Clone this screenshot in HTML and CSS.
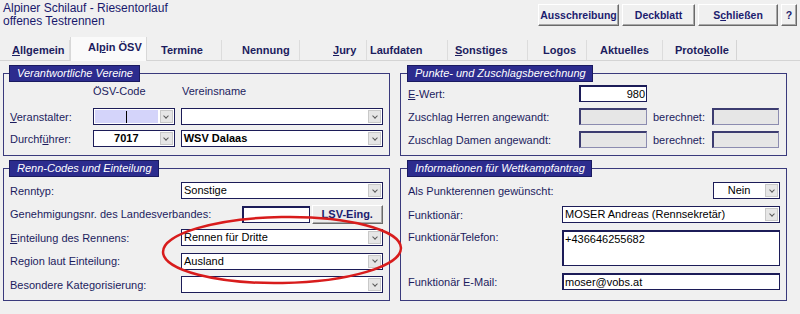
FILE: index.html
```html
<!DOCTYPE html>
<html lang="de">
<head>
    <meta charset="UTF-8">
    <title>Alpin ÖSV</title>
    <link rel="stylesheet" href="styles.css">
</head>
<body>
    <div class="top">
        <h1 class="title">Alpiner Schilauf - Riesentorlauf<br>offenes Testrennen</h1>
        <div class="actions">
            <button class="btn btn-aus">Ausschreibung</button>
            <button class="btn btn-deck">Deckblatt</button>
            <button class="btn btn-close">S<u>c</u>hließen</button>
            <button class="btn btn-help">?</button>
        </div>
    </div>

    <div class="tabs">
        <div class="tab"><u>A</u>llgemein</div>
        <div class="tab active">Al<u>p</u>in ÖSV</div>
        <div class="tab">Termine</div>
        <div class="tab">Nennung</div>
        <div class="tab"><u>J</u>ury</div>
        <div class="tab">Laufdaten</div>
        <div class="tab"><u>S</u>onstiges</div>
        <div class="tab">Logos</div>
        <div class="tab">Aktuelles</div>
        <div class="tab">Proto<u>k</u>olle</div>
    </div>

    <div class="panels">
        <!-- Vereine -->
        <fieldset class="box box-vereine">
            <legend>Verantwortliche Vereine</legend>
            <div class="form">
                <div class="head">
                    <span class="lbl"></span>
                    <span class="col-code">ÖSV-Code</span>
                    <span class="col-name">Vereinsname</span>
                </div>
                <div class="row">
                    <span class="lbl"><u>V</u>eranstalter:</span>
                    <div class="select sel-code">
                        <span class="val val-focus"><span class="caret"></span></span>
                        <span class="arr"></span>
                    </div>
                    <div class="select sel-name">
                        <span class="val"></span>
                        <span class="arr"></span>
                    </div>
                </div>
                <div class="row">
                    <span class="lbl">Durchf<u>ü</u>hrer:</span>
                    <div class="select sel-code">
                        <span class="val val-center bold">7017</span>
                        <span class="arr"></span>
                    </div>
                    <div class="select sel-name">
                        <span class="val bold">WSV Dalaas</span>
                        <span class="arr"></span>
                    </div>
                </div>
            </div>
        </fieldset>

        <!-- Punkte -->
        <fieldset class="box box-punkte">
            <legend>Punkte- und Zuschlagsberechnung</legend>
            <div class="form">
                <div class="row">
                    <span class="lbl"><u>E</u>-Wert:</span>
                    <div class="field field-num">980</div>
                </div>
                <div class="row">
                    <span class="lbl">Zuschlag Herren angewandt:</span>
                    <div class="field field-off"></div>
                    <span class="lbl-calc">berechnet:</span>
                    <div class="field field-off field-calc"></div>
                </div>
                <div class="row">
                    <span class="lbl">Zuschlag Damen angewandt:</span>
                    <div class="field field-off"></div>
                    <span class="lbl-calc">berechnet:</span>
                    <div class="field field-off field-calc"></div>
                </div>
            </div>
        </fieldset>

        <!-- Renn-Codes -->
        <fieldset class="box box-codes">
            <legend>Renn-Codes und Einteilung</legend>
            <div class="form">
                <div class="row">
                    <span class="lbl">Renntyp:</span>
                    <div class="select sel-wide">
                        <span class="val">Sonstige</span>
                        <span class="arr"></span>
                    </div>
                </div>
                <div class="row">
                    <span class="lbl">Genehmigungsnr. des Landesverbandes:</span>
                    <div class="field field-lsv"></div>
                    <button class="btn btn-lsv">LSV-Eing.</button>
                </div>
                <div class="row">
                    <span class="lbl"><u>E</u>inteilung des Rennens:</span>
                    <div class="select sel-wide">
                        <span class="val">Rennen für Dritte</span>
                        <span class="arr"></span>
                    </div>
                </div>
                <div class="row">
                    <span class="lbl">Region laut Einteilung:</span>
                    <div class="select sel-wide">
                        <span class="val">Ausland</span>
                        <span class="arr"></span>
                    </div>
                </div>
                <div class="row">
                    <span class="lbl">Besondere Kategorisierung:</span>
                    <div class="select sel-wide">
                        <span class="val"></span>
                        <span class="arr"></span>
                    </div>
                </div>
            </div>
        </fieldset>

        <!-- Wettkampfantrag -->
        <fieldset class="box box-antrag">
            <legend>Informationen für Wettkampfantrag</legend>
            <div class="form">
                <div class="row">
                    <span class="lbl">Als Punkterennen gewünscht:</span>
                    <div class="select sel-small">
                        <span class="val val-center">Nein</span>
                        <span class="arr"></span>
                    </div>
                </div>
                <div class="row">
                    <span class="lbl">Funktionär:</span>
                    <div class="select sel-wide">
                        <span class="val">MOSER Andreas (Rennsekretär)</span>
                        <span class="arr"></span>
                    </div>
                </div>
                <div class="row row-tall">
                    <span class="lbl">FunktionärTelefon:</span>
                    <div class="field field-area">+436646255682</div>
                </div>
                <div class="row">
                    <span class="lbl">Funktionär E-Mail:</span>
                    <div class="field field-mail">moser@vobs.at</div>
                </div>
            </div>
        </fieldset>
    </div>

    <svg class="mark" width="800" height="314" viewBox="0 0 800 314">
        <ellipse cx="282" cy="250" rx="119" ry="33" transform="rotate(-1 282 250)" fill="none" stroke="#d81c1c" stroke-width="2.5"/>
    </svg>
</body>
</html>
```

FILE: styles.css
```css
body {
    margin: 0;
    width: 800px;
    height: 314px;
    overflow: hidden;
    position: relative;
    background-color: #f0f0f0;
    font-family: "Liberation Sans", Arial, sans-serif;
    font-size: 11px;
    color: #1c1c5e;
}

/* cabecera */
.top {
    display: flex;
    justify-content: space-between;
    align-items: flex-start;
    height: 37px;
    padding: 2px 3px 0 3px;
    box-sizing: border-box;
}
.title {
    margin: 0;
    font-size: 12px;
    font-weight: normal;
    line-height: 13px;
    color: #18186c;
    padding-top: 0;
}
.actions {
    display: flex;
    gap: 3px;
    margin-top: 2px;
}
.btn {
    height: 22px;
    padding: 0;
    background-color: #f0f0f0;
    border: 1px solid;
    border-color: #ffffff #6a6a6a #6a6a6a #ffffff;
    box-shadow: inset -1px -1px 0 #a8a8a8;
    font-family: "Liberation Sans", Arial, sans-serif;
    font-size: 10.5px;
    font-weight: bold;
    color: #1c1c6e;
}
.btn-aus { width: 81px; }
.btn-deck { width: 73px; }
.btn-close { width: 80px; }
.btn-help { width: 16px; }

/* pestañas */
.tabs {
    display: flex;
    align-items: flex-end;
    height: 24px;
    padding-left: 2px;
    border-bottom: 1px solid #d4d4d4;
    box-sizing: border-box;
}
.tab {
    height: 20px;
    line-height: 20px;
    font-weight: bold;
    color: #1c1c5e;
    box-sizing: border-box;
    border-right: 1px solid #dcdcdc;
    white-space: nowrap;
}
.tab.active {
    height: 24px;
    line-height: 21px;
    background-color: #fafafa;
    border-left: 1px solid #d8d8d8;
    border-right: 1px solid #d8d8d8;
    margin-bottom: -1px;
}
.tab:nth-child(1) { width: 68px; padding-left: 10px; }
.tab:nth-child(2) { width: 77px; padding-left: 17px; }
.tab:nth-child(3) { width: 75px; padding-left: 14px; }
.tab:nth-child(4) { width: 78px; padding-left: 20px; }
.tab:nth-child(5) { width: 67px; padding-left: 33px; }
.tab:nth-child(6) { width: 81px; padding-left: 3px; }
.tab:nth-child(7) { width: 80px; padding-left: 7px; }
.tab:nth-child(8) { width: 59px; padding-left: 15px; }
.tab:nth-child(9) { width: 76px; padding-left: 13px; }
.tab:nth-child(10) { width: 74px; padding-left: 12px; border-right: 1px solid #d4d4d4; }

/* paneles */
.panels {
    display: grid;
    grid-template-columns: 387px 387px;
    grid-template-rows: 90px 140px;
    column-gap: 10px;
    row-gap: 5px;
    padding: 0 3px;
    margin-top: 5px;
}
.box {
    margin: 0;
    min-width: 0;
    height: 100%;
    box-sizing: border-box;
    border: 1px solid #3a3a7c;
    padding: 0 6px 0 6px;
}
.box legend {
    padding: 0 6px 0 7px;
    line-height: 15px;
    background-color: #2c2c8e;
    color: #ffffff;
    font-style: italic;
    outline: 1px solid #1a1a60;
}
.box-punkte, .box-antrag {
    padding: 0 6px 0 7px;
}
.form {
    display: flex;
    flex-direction: column;
}
.box-vereine .form { padding-top: 3px; gap: 5px; }
.box-punkte .form { padding-top: 4px; gap: 6px; }
.box-codes .form { padding-top: 6px; gap: 6.5px; }
.box-antrag .form { padding-top: 6px; gap: 7px; }

.row {
    display: flex;
    align-items: center;
    height: 17px;
}
.row-tall {
    height: 36px;
    align-items: flex-start;
}
.row-tall .lbl {
    padding-top: 1px;
}
.head {
    display: flex;
    height: 14px;
    line-height: 14px;
    margin-bottom: 5px;
}
.lbl {
    flex: none;
    white-space: nowrap;
}
.box-vereine .lbl { width: 83px; }
.box-punkte .lbl { width: 171px; }
.box-codes .lbl { width: 171px; }
.box-antrag .lbl { width: 154px; }
.col-code { width: 88px; padding-left: 0; }
.col-name { padding-left: 1px; }

/* listas desplegables */
.select {
    display: flex;
    height: 17px;
    box-sizing: border-box;
    border: 1px solid #1c1c58;
    background-color: #ffffff;
}
.val {
    flex: 1;
    padding: 0 2px;
    line-height: 15px;
    color: #000000;
    white-space: nowrap;
    overflow: hidden;
}
.val-center { text-align: center; }
.val-focus {
    background-color: #d4d4fa;
    display: flex;
    justify-content: center;
    align-items: center;
    margin: 1px 1px 1px 1px;
}
.caret {
    width: 1px;
    height: 12px;
    background-color: #000000;
}
.bold { font-weight: bold; }
.arr {
    flex: none;
    width: 13px;
    margin: 1px;
    box-sizing: border-box;
    border: 1px solid #c8c8c8;
    background-color: #e6e6e6;
    display: flex;
    justify-content: center;
    align-items: center;
}
.arr::after {
    content: "";
    width: 3px;
    height: 3px;
    border-right: 1px solid #5a5a5a;
    border-bottom: 1px solid #5a5a5a;
    transform: rotate(45deg);
    margin-top: -2px;
}
.sel-code { width: 82px; }
.sel-name { width: 203px; margin-left: 6px; }
.sel-wide { flex: 1; }
.sel-small { width: 67px; margin-left: auto; }

/* campos de texto */
.field {
    height: 17px;
    box-sizing: border-box;
    border: 1px solid #1c1c58;
    border-top-width: 2px;
    border-left-width: 2px;
    background-color: #ffffff;
    color: #000000;
    line-height: 14px;
    padding: 0 1px;
    white-space: nowrap;
}
.field-num { width: 68px; text-align: right; }
.field-off {
    width: 68px;
    background-color: #e6e6e6;
    border-color: #3c3c70 #8c8cb0 #8c8cb0 #3c3c70;
}
.field-calc { width: 67px; }
.lbl-calc {
    width: 59px;
    margin-left: 6px;
    flex: none;
}
.field-lsv { width: 68px; margin-left: 61px; }
.btn-lsv {
    width: 72px;
    height: 19px;
    margin-left: 2px;
    font-size: 11px;
    background-color: #ececec;
}
.field-area {
    flex: 1;
    height: 36px;
}
.field-mail { flex: 1; }

.mark {
    position: absolute;
    left: 0;
    top: 0;
    pointer-events: none;
}
```
